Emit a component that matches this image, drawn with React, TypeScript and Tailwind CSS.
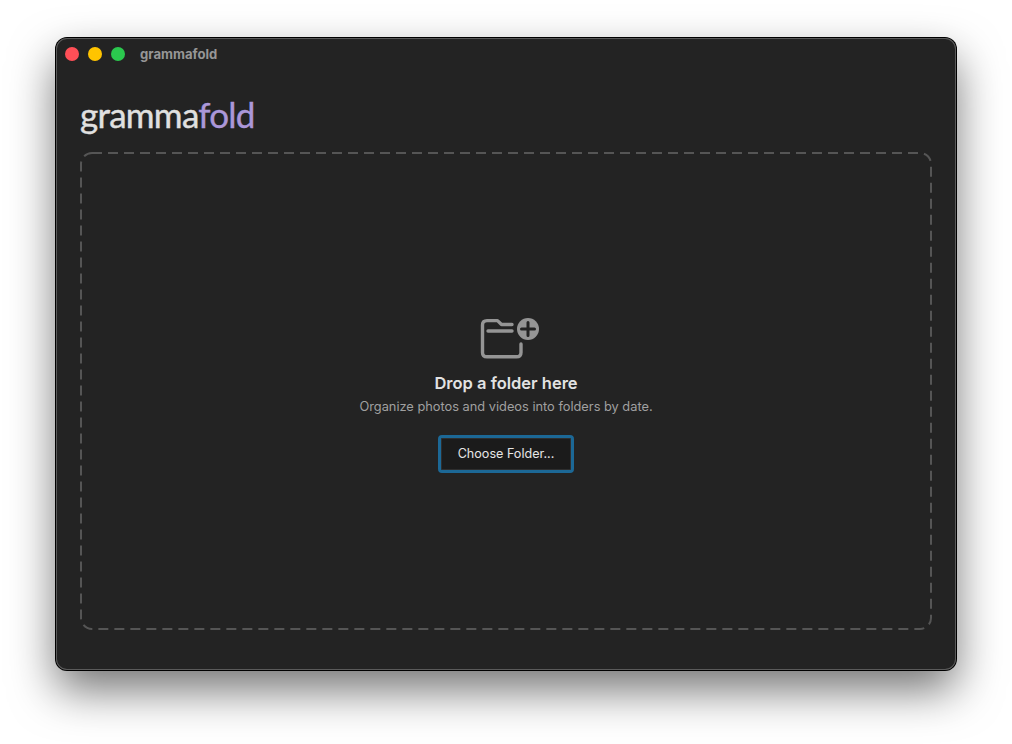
import React from "react";

function FolderPlus() {
  return (
    <svg width="60" height="42" viewBox="0 0 60 42" fill="none" className="block">
      <path
        d="M32 7.5H21.5L17.5 3.6H7C4.2 3.6 2.5 5.4 2.5 8V35.5C2.5 38.2 4.2 39.8 7 39.8H36.5C39.2 39.8 41 38.2 41 35.5V27"
        stroke="#959595"
        strokeWidth="3.4"
        strokeLinecap="round"
        strokeLinejoin="round"
      />
      <path d="M8 14H32" stroke="#959595" strokeWidth="3.4" strokeLinecap="round" />
      <circle cx="48" cy="12" r="11" fill="#959595" />
      <path d="M48 5.5V18.5M41.5 12H54.5" stroke="#232323" strokeWidth="3" strokeLinecap="round" />
    </svg>
  );
}

export default function App() {
  return (
    <div className="h-[744px] w-[1012px] overflow-hidden bg-white pl-[56px] pt-[38px] font-['Inter',sans-serif] antialiased">
      <div className="flex h-[632px] w-[900px] flex-col rounded-[11px] bg-[#232323] shadow-[0_0_0_1px_#000,inset_0_0_0_1px_#5a5a5a,0_20px_45px_0_rgba(0,0,0,0.55)]">
        {/* Title bar */}
        <div className="flex h-[32px] shrink-0 items-center pl-[9px]">
          <div className="flex gap-[9px]">
            <span className="h-[14px] w-[14px] rounded-full bg-[#ff4f57]" />
            <span className="h-[14px] w-[14px] rounded-full bg-[#ffc400]" />
            <span className="h-[14px] w-[14px] rounded-full bg-[#2bc84e]" />
          </div>
          <span className="ml-[15px] pt-[1px] text-[13.1px] font-bold text-[#969696]">grammafold</span>
        </div>

        <div className="flex min-h-0 flex-1 flex-col px-[24px] pb-[40px]">
          <h1 className="mt-[22px] h-[60px] text-[35px] leading-[44px] font-normal font-['Lato',sans-serif] tracking-[-0.75px] text-[#e0e0e0] [-webkit-text-stroke:0.4px_currentColor]">
            gramma<span className="text-[#ab97d9]">fold</span>
          </h1>

          {/* Drop zone */}
          <div className="relative flex flex-1 flex-col items-center pt-[165px]">
            <svg width="852" height="478" fill="none" className="absolute left-0 top-0">
              <rect x="1" y="1" width="850" height="476" rx="11" stroke="#555555" strokeWidth="2" strokeDasharray="10 6" />
            </svg>
            <div className="pl-[8px]">
              <FolderPlus />
            </div>
            <p className="mt-[14px] text-[16.5px] leading-[21px] font-semibold text-[#e2e2e2]">Drop a folder here</p>
            <p className="mt-[4px] text-[12.8px] leading-[18px] text-[#a0a0a0]">
              Organize photos and videos into folders by date.
            </p>
            <button className="mt-[19px] h-[38px] w-[136px] rounded-[4px] border-[3.5px] border-[#1c6896] bg-[#1b1b1b] pt-[1px] text-[12.6px] text-[#e6e6e6] shadow-[inset_0_0_0_1px_#2e2e2e]">
              Choose Folder...
            </button>
          </div>
        </div>
      </div>
    </div>
  );
}
